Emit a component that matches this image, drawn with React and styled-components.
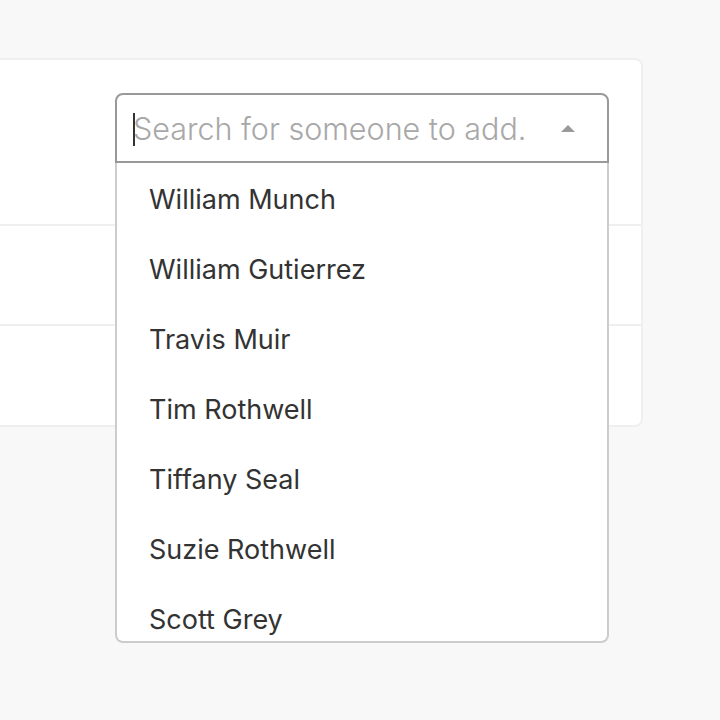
import React from 'react';
import styled, { createGlobalStyle } from 'styled-components';

const GlobalStyle = createGlobalStyle`
  html, body {
    margin: 0;
    padding: 0;
    background: #f8f8f8;
    font-family: Inter, "Noto Sans", "Liberation Sans", sans-serif;
  }
`;

const Page = styled.div`
  width: 720px;
  height: 720px;
  overflow: hidden;
  padding-top: 58px;
  box-sizing: border-box;
`;

const Card = styled.div`
  margin-left: -20px;
  width: 663px;
  background: #fff;
  border: 2px solid #efefef;
  border-radius: 8px;
  box-sizing: border-box;
`;

const Row = styled.div`
  height: ${(p) => p.h}px;
  box-sizing: border-box;
  border-top: ${(p) => (p.first ? 'none' : '2px solid #efefef')};
  display: flex;
  justify-content: flex-end;
  align-items: flex-start;
  padding: 33px 32px 0 0;
`;

const SelectWrap = styled.div`
  position: relative;
  width: 494px;
`;

const Control = styled.div`
  height: 70px;
  box-sizing: border-box;
  border: 2px solid #999;
  border-radius: 8px 8px 0 0;
  display: flex;
  align-items: center;
  padding: 0 32px 0 16px;
  background: #fff;
`;

const Input = styled.div`
  flex: 1;
  position: relative;
  overflow: hidden;
  white-space: nowrap;
  font-size: 30.5px;
  font-weight: 300;
  color: #a8a8a8;
  margin-right: 33px;
  &::before {
    content: '';
    position: absolute;
    left: 0;
    top: 3px;
    bottom: 1px;
    width: 2px;
    background: #333;
  }
`;

const Arrow = styled.span`
  width: 0;
  height: 0;
  border-left: 7px solid transparent;
  border-right: 7px solid transparent;
  border-bottom: 7px solid #999;
`;

const Menu = styled.div`
  position: absolute;
  top: 70px;
  left: 0;
  right: 0;
  height: 480px;
  overflow: hidden;
  background: #fff;
  border: 2px solid #ccc;
  border-top: none;
  border-radius: 0 0 8px 8px;
  box-sizing: border-box;
  z-index: 2;
`;

const Option = styled.div`
  height: 70px;
  display: flex;
  align-items: center;
  padding: 3px 0 0 32px;
  box-sizing: border-box;
  font-size: 27px;
  color: #333;
`;

const people = [
  'William Munch',
  'William Gutierrez',
  'Travis Muir',
  'Tim Rothwell',
  'Tiffany Seal',
  'Suzie Rothwell',
  'Scott Grey',
];

const App = () => (
  <Page>
    <GlobalStyle />
    <Card>
      <Row first h={164}>
        <SelectWrap>
          <Control>
            <Input>Search for someone to add...</Input>
            <Arrow />
          </Control>
          <Menu>
            {people.map((name) => (
              <Option key={name}>{name}</Option>
            ))}
          </Menu>
        </SelectWrap>
      </Row>
      <Row h={100} />
      <Row h={101} />
    </Card>
  </Page>
);

export default App;
